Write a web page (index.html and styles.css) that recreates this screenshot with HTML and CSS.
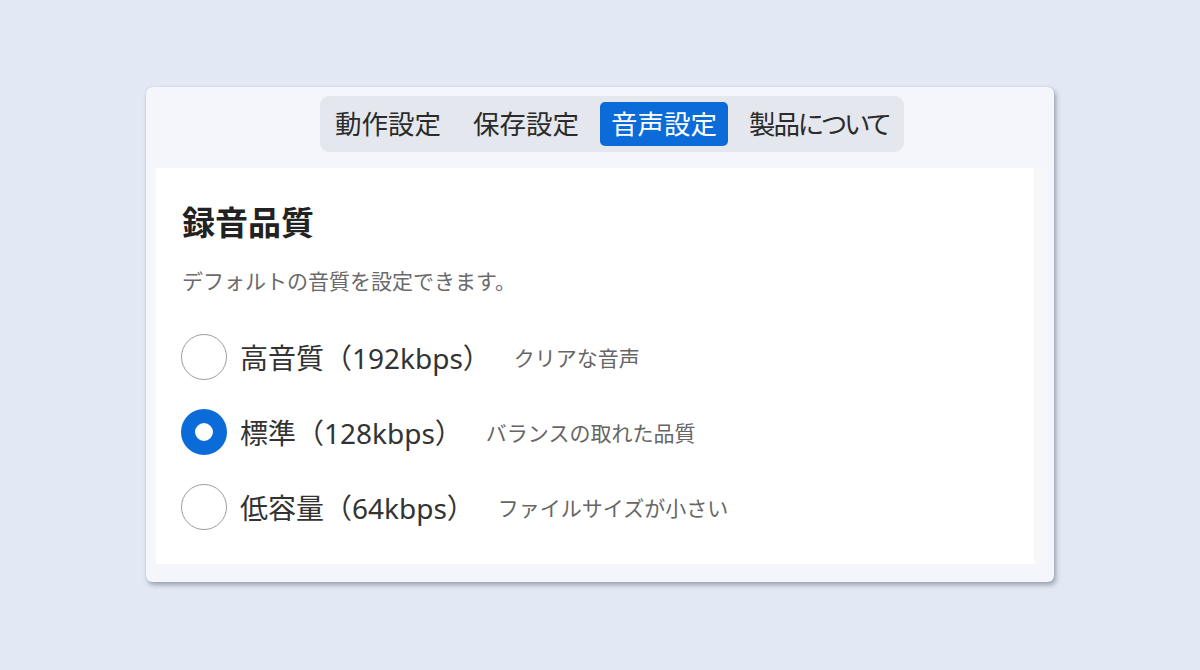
FILE: index.html
```html
<!DOCTYPE html>
<html lang="ja">
<head>
<meta charset="utf-8">
<title>設定</title>
<link rel="stylesheet" href="styles.css">
</head>
<body>
<div class="card">
  <div class="header">
    <nav class="tabs">
      <span class="tab">動作設定</span>
      <span class="tab">保存設定</span>
      <span class="tab active">音声設定</span>
      <span class="tab tight">製品について</span>
    </nav>
  </div>
  <div class="body">
    <section class="panel">
      <h1 class="title">録音品質</h1>
      <p class="desc">デフォルトの音質を設定できます。</p>
      <div class="options">
        <label class="option">
          <span class="radio"></span>
          <span class="label">高音質（192kbps）</span>
          <span class="sub">クリアな音声</span>
        </label>
        <label class="option">
          <span class="radio checked"></span>
          <span class="label">標準（128kbps）</span>
          <span class="sub">バランスの取れた品質</span>
        </label>
        <label class="option">
          <span class="radio"></span>
          <span class="label">低容量（64kbps）</span>
          <span class="sub">ファイルサイズが小さい</span>
        </label>
      </div>
    </section>
    <div class="track"></div>
  </div>
</div>
</body>
</html>
```
FILE: styles.css
```css
* { box-sizing: border-box; }
html, body { margin: 0; padding: 0; }
body {
  width: 1200px;
  height: 670px;
  background: #e2e9f4;
  font-family: "Noto Sans", "Noto Sans CJK JP", sans-serif;
  padding-top: 87px;
  padding-left: 146px;
}
.card {
  width: 908px;
  height: 495px;
  background: #f4f6fb;
  border-radius: 6px;
  box-shadow: 2px 3px 5px rgba(40, 50, 70, 0.38), 0 0 1px rgba(40, 50, 70, 0.3);
  padding: 9px 8px 18px 10px;
  display: flex;
  flex-direction: column;
}
.header {
  display: flex;
  justify-content: center;
  padding-left: 22px;
}
.tabs {
  display: flex;
  gap: 10px;
  padding: 6px 4px;
  background: #e4e7ed;
  border-radius: 9px;
}
.tab {
  height: 44px;
  line-height: 44px;
  padding: 0 11px;
  font-size: 26.5px;
  color: #2b2b2b;
  border-radius: 5px;
  font-feature-settings: "palt";
}
.tab.tight {
  letter-spacing: -2px;
}
.tab.active {
  background: #0b6bd9;
  color: #ffffff;
}
.body {
  flex: 1;
  display: flex;
  margin-top: 16px;
}
.panel {
  flex: 1;
  background: #ffffff;
  padding: 35px 26px 0 26px;
}
.track {
  width: 12px;
  background: #f7f7fa;
}
.title {
  margin: 0;
  font-size: 33px;
  line-height: 40px;
  font-weight: 700;
  color: #222222;
}
.desc {
  margin: 23px 0 0 0;
  font-size: 21px;
  line-height: 30px;
  color: #6a6a6a;
}
.options {
  margin-top: 38px;
  display: flex;
  flex-direction: column;
  gap: 29px;
}
.option {
  display: flex;
  align-items: center;
  height: 46px;
}
.radio {
  width: 46px;
  height: 46px;
  border-radius: 50%;
  border: 1.5px solid #9c9c9c;
  background: #ffffff;
  flex: none;
  margin-left: -1px;
}
.radio.checked {
  border: 14px solid #0b6bd9;
}
.label {
  margin-left: 13px;
  font-size: 28px;
  color: #333333;
}
.sub {
  margin-left: 23px;
  font-size: 21px;
  color: #666666;
}
```
